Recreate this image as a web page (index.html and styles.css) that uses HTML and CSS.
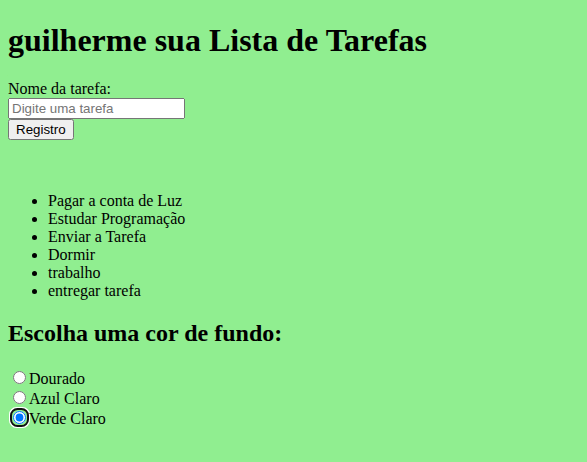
FILE: index.html
```html
<!DOCTYPE html>
<html lang="pt-BR">
<head>
<meta charset="utf-8">
<title>Lista de Tarefas</title>
<link rel="stylesheet" href="styles.css">
</head>
<body class="page">
<h1 class="title">guilherme sua Lista de Tarefas</h1>
<form class="task-form">
<label class="task-label" for="tarefa">Nome da tarefa:</label><br>
<input class="task-input" type="text" id="tarefa" placeholder="Digite uma tarefa"><br>
<button class="task-button" type="button">Registro</button>
</form>
<div class="spacer"></div>
<ul class="task-list">
<li>Pagar a conta de Luz</li>
<li>Estudar Programação</li>
<li>Enviar a Tarefa</li>
<li>Dormir</li>
<li>trabalho</li>
<li>entregar tarefa</li>
</ul>
<h2 class="subtitle">Escolha uma cor de fundo:</h2>
<div class="colors">
<label class="color-option"><input type="radio" name="cor" value="dourado">Dourado</label><br>
<label class="color-option"><input type="radio" name="cor" value="azul">Azul Claro</label><br>
<label class="color-option"><input type="radio" name="cor" value="verde" checked autofocus>Verde Claro</label>
</div>
</body>
</html>
```
FILE: styles.css
```css
.page {
  background: #90ee90;
  font-family: "Liberation Serif", "Times New Roman", serif;
  font-size: 16px;
  color: #000;
  margin: 8px;
}
.title {
  margin: 14px 0 21px;
}
.task-input, .task-button {
  font-family: "Liberation Sans", Arial, sans-serif;
  font-size: 13.333px;
}
.task-input {
  box-sizing: border-box;
  width: 177px;
  height: 21px;
}
.task-button {
  box-sizing: border-box;
  height: 21px;
}
.spacer {
  height: 36px;
}
.subtitle {
  margin-bottom: 21px;
}
```
